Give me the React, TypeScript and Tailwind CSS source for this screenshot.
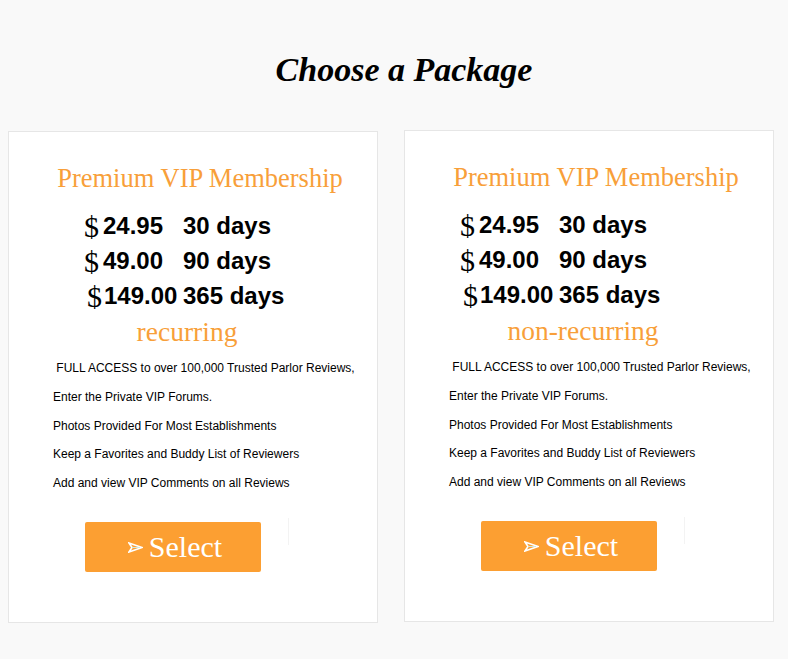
import React from "react";

const serif = { fontFamily: '"Liberation Serif", "Times New Roman", serif' };
const sans = { fontFamily: '"Liberation Sans", Arial, sans-serif' };

const features = [
  "\u00a0FULL ACCESS to over 100,000 Trusted Parlor Reviews,",
  "Enter the Private VIP Forums.",
  "Photos Provided For Most Establishments",
  "Keep a Favorites and Buddy List of Reviewers",
  "Add and view VIP Comments on all Reviews",
];

function Arrow() {
  return (
    <svg width="15" height="11" viewBox="0 0 15 11" className="mr-[6px] mt-[2px]">
      <path d="M1 1 L14 5.5 L1 10 L4 5.5 Z" fill="none" stroke="#ffffff" strokeWidth="1.6" strokeLinejoin="miter" />
      <path d="M4 5.5 L12 5.5" stroke="#cfe8e0" strokeWidth="1" />
    </svg>
  );
}

function Card({ kind, priceIndent, className }: { kind: string; priceIndent: string; className: string }) {
  const rows = [
    ["24.95", "30 days", false],
    ["49.00", "90 days", false],
    ["149.00", "365 days", true],
  ] as const;
  return (
    <div className={`w-[370px] h-[492px] bg-white border border-[#e6e6e6] flex flex-col ${className}`}>
      <div className="pt-[31px] text-center text-[#f89f3a] text-[26.5px] leading-[30px] pl-[14px]" style={serif}>
        Premium VIP Membership
      </div>
      <div className={`mt-[15px] flex flex-col ${priceIndent}`}>
        {rows.map(([p, d, wide]) => (
          <div key={p} className={`flex items-center h-[35px] ${wide ? "ml-[3px]" : ""}`}>
            <span className={`text-[30px] leading-[35px] text-black mt-[1px] ${wide ? "mr-[2px]" : "mr-[4px]"}`} style={serif}>$</span>
            <span className={`font-bold text-[24px] leading-[35px] text-black ${wide ? "w-[79px]" : "w-[80px]"}`} style={sans}>{p}</span>
            <span className="font-bold text-[24px] leading-[35px] text-black" style={sans}>{d}</span>
          </div>
        ))}
      </div>
      <div className="text-center text-[#f89f3a] text-[27.5px] leading-[35px] -ml-[12px] mt-[1px]" style={serif}>{kind}</div>
      <div className="mt-[5px] pl-[44px] flex flex-col">
        {features.map((f) => (
          <div key={f} className="text-[12px] leading-[28.75px] text-black whitespace-pre" style={sans}>{f}</div>
        ))}
      </div>
      <div className="mt-[24px] pl-[76px] flex items-start">
        <button className="w-[176px] h-[50px] bg-[#fc9f32] rounded-[2px] flex items-center justify-center text-white text-[30px] pl-[4px]" style={serif}>
          <Arrow />
          Select
        </button>
        <div className="ml-[27px] -mt-[4px] w-px h-[27px] bg-[#f3f3f3]" />
      </div>
    </div>
  );
}

export default function App() {
  return (
    <div className="min-h-screen bg-[#f9f9f9] pb-[40px]">
      <h1 className="pt-[50px] pl-[20px] text-center text-[34px] leading-[40px] font-bold italic text-black" style={serif}>
        Choose a Package
      </h1>
      <div className="mt-[40px] flex items-start gap-[26px] pl-[8px]">
        <Card kind="recurring" priceIndent="pl-[75px]" className="mt-[1px]" />
        <Card kind="non-recurring" priceIndent="pl-[55px]" className="" />
      </div>
    </div>
  );
}
